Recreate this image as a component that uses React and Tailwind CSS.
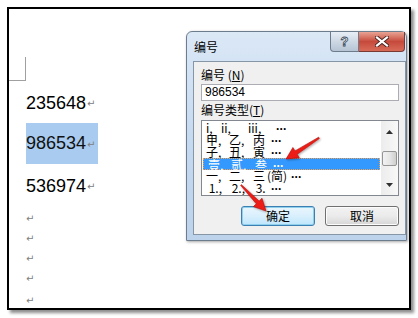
import React from "react";

const cjk = { fontFamily: '"Noto Sans CJK SC", "Liberation Sans", sans-serif' };
const doc = { fontFamily: '"Liberation Sans", Arial, sans-serif' };
const ret = { fontFamily: '"DejaVu Sans", sans-serif' };

function Ret() {
  return (
    <span className="text-[10px] text-[#808080] ml-[1px] relative top-[1px]" style={ret}>
      ↵
    </span>
  );
}

function Dots() {
  return (
    <span className="font-bold text-[12px] tracking-[-0.5px]" style={doc}>
      ···
    </span>
  );
}

function Row({ cols, selected }) {
  return (
    <div
      className={
        "h-[12px] leading-[12px] text-[12px] flex whitespace-pre pl-[4px] " +
        (selected
          ? "bg-[#3399ff] text-white border border-dotted border-[#f0a050] mx-[1px] pl-[3px]"
          : "text-black")
      }
    >
      {cols.map((c, i) => (
        <span key={i} style={{ width: c[1] }} className="shrink-0 h-[12px] leading-[12px]">
          {c[0] === "D" ? <Dots /> : c[0]}
        </span>
      ))}
    </div>
  );
}

export default function App() {
  const rows = [
    { cols: [["i,", 15], ["ii,", 27], ["iii,", 28], ["D", 20]] },
    { cols: [["甲,", 23], ["乙,", 24], ["丙 ", 18], ["D", 20]] },
    { cols: [["子,", 23], ["丑,", 24], ["寅 ", 18], ["D", 20]] },
    { cols: [["壹,", 23], ["贰,", 24], ["叁 ", 18], ["D", 20]], selected: true },
    { cols: [["一,", 23], ["二,", 24], ["三 ", 14], ["(简)", 24], ["D", 20]] },
    { cols: [[" 1.,", 23], [" 2.,", 24], [" 3.", 18], ["D", 20]] },
  ];

  return (
    <div className="relative w-[418px] h-[318px] bg-white overflow-hidden pt-[7px] pl-[7px]">
      {/* page frame */}
      <div className="w-[404px] h-[303px] border-2 border-black bg-white shadow-[3px_3px_3px_rgba(0,0,0,0.45)] overflow-hidden flex flex-col">
        <div className="mt-[48px] w-[17px] h-[24px] border-r border-b border-[#a0a0a0] shrink-0" />
        <div className="pl-[17px] flex flex-col" style={doc}>
          <div className="mt-[12px] h-[20px] leading-[20px] text-[18px] text-black flex items-center">
            235648
            <Ret />
          </div>
          <div className="mt-[10px] h-[41px] flex items-center">
            <div className="w-[72px] h-[41px] bg-[#a8cbef] flex items-center text-[18px] text-[#111]">
              986534
              <Ret />
            </div>
          </div>
          <div className="mt-[12px] h-[20px] leading-[20px] text-[18px] text-black flex items-center">
            536974
            <Ret />
          </div>
          <div className="mt-[12px] flex flex-col">
            <div className="h-[20px] flex items-center"><span className="text-[10px] text-[#808080]" style={ret}>↵</span></div>
            <div className="h-[20px] flex items-center"><span className="text-[10px] text-[#808080]" style={ret}>↵</span></div>
            <div className="h-[20px] flex items-center"><span className="text-[10px] text-[#808080]" style={ret}>↵</span></div>
            <div className="h-[20px] flex items-center"><span className="text-[10px] text-[#808080]" style={ret}>↵</span></div>
            <div className="mt-[2px] h-[20px] flex items-center"><span className="text-[10px] text-[#808080]" style={ret}>↵</span></div>
          </div>
        </div>
      </div>

      {/* dialog window */}
      <div
        className="absolute left-[186px] top-[31px] w-[221px] h-[210px] rounded-t-[6px] border border-[#6d7d8e] bg-gradient-to-b from-[#dbe8f6] via-[#c6daf0] to-[#bcd3eb] shadow-[1px_1px_3px_rgba(0,0,0,0.35)] flex flex-col"
        style={cjk}
      >
        {/* title bar */}
        <div className="h-[29px] flex items-start shrink-0">
          <div className="pl-[7px] pt-[7px] text-[12px] leading-[16px] text-black">编号</div>
          <div className="ml-auto mr-[1px] flex">
            <div className="w-[29px] h-[20px] border border-t-0 border-[#6c7c8c] rounded-bl-[4px] bg-gradient-to-b from-[#e8eef5] via-[#cdd8e4] to-[#b6c4d4] flex items-center justify-center">
              <span className="text-[13px] font-bold text-[#f4f6f8] leading-none" style={{ ...doc, WebkitTextStroke: "0.8px #3b4a5a" }}>?</span>
            </div>
            <div className="w-[46px] h-[20px] border border-l-0 border-t-0 border-[#7a3a34] rounded-br-[4px] bg-gradient-to-b from-[#e8a394] via-[#c64a3c] to-[#d86a58] flex items-center justify-center">
              <svg width="14" height="11" viewBox="0 0 14 11">
                <path d="M2 1.5 L12 9.5 M12 1.5 L2 9.5" stroke="#4a2320" strokeWidth="4" strokeLinecap="square" />
                <path d="M2 1.5 L12 9.5 M12 1.5 L2 9.5" stroke="#ffffff" strokeWidth="2.2" strokeLinecap="square" />
              </svg>
            </div>
          </div>
        </div>

        {/* client panel */}
        <div className="ml-[6px] w-[213px] h-[174px] border border-[#8696a6] bg-[#f0f0f0] flex flex-col pt-[5px] pl-[7px] pr-[6px]">
          <div className="h-[16px] leading-[16px] text-[12px] text-black">
            编号 (<span className="underline">N</span>)
          </div>
          <div className="mt-[1px] h-[17px] border border-[#abadb3] bg-white text-[12px] leading-[15px] pl-[3px] text-black" style={doc}>
            986534
          </div>
          <div className="h-[16px] leading-[16px] text-[12px] text-black mt-[1px]">
            编号类型(<span className="underline">T</span>)
          </div>
          <div className="mt-[2px] h-[76px] border border-[#828790] bg-white flex overflow-hidden">
            <div className="flex-1 pt-[1px] flex flex-col" style={cjk}>
              {rows.map((r, i) => (
                <Row key={i} cols={r.cols} selected={r.selected} />
              ))}
            </div>
            <div className="w-[17px] h-full bg-gradient-to-r from-[#ececec] to-[#f8f8f8] flex flex-col items-center">
              <div className="h-[17px] flex items-center justify-center pt-[4px]">
                <svg width="7" height="4" viewBox="0 0 7 4"><path d="M0 4 L3.5 0 L7 4 Z" fill="#303030" /></svg>
              </div>
              <div className="mt-[13px] w-[15px] h-[15px] border border-[#959595] rounded-[2px] bg-gradient-to-r from-[#f2f2f2] via-[#e6e6e6] to-[#cfcfcf]" />
              <div className="mt-auto h-[17px] flex items-center justify-center pb-[4px]">
                <svg width="7" height="4" viewBox="0 0 7 4"><path d="M0 0 L7 0 L3.5 4 Z" fill="#303030" /></svg>
              </div>
            </div>
          </div>
          <div className="mt-[10px] flex justify-end gap-[10px]">
            <div className="w-[74px] h-[20px] rounded-[3px] border border-[#3c7fb1] shadow-[inset_0_0_0_1px_#8fd0ef] bg-gradient-to-b from-[#eaf6fd] via-[#d9effc] to-[#bee6fd] flex items-center justify-center text-[12px] text-black">
              确定
            </div>
            <div className="w-[74px] h-[20px] rounded-[3px] border border-[#707070] shadow-[inset_0_0_0_1px_#fcfcfc] bg-gradient-to-b from-[#f2f2f2] via-[#ebebeb] to-[#d6d6d6] flex items-center justify-center text-[12px] text-black">
              取消
            </div>
          </div>
        </div>
      </div>

      {/* red annotation arrows */}
      <svg className="absolute left-0 top-0 pointer-events-none" width="418" height="318" viewBox="0 0 418 318">
        <defs>
          <filter id="sh" x="-20%" y="-20%" width="140%" height="140%">
            <feDropShadow dx="1" dy="1" stdDeviation="0.8" floodColor="#000" floodOpacity="0.35" />
          </filter>
        </defs>
        <polygon
          points="318.7,137.2 295.0,150.9 292.9,147.5 286,159 299.3,157.7 297.2,154.3 319.3,138.6"
          fill="#ee1c14"
          stroke="#b00c08"
          strokeWidth="0.6"
          filter="url(#sh)"
        />
        <polygon
          points="240.6,185.35 256.3,203.8 253.4,206.6 266,211 262.0,198.2 259.1,201.0 241.4,184.65"
          fill="#ee1c14"
          stroke="#b00c08"
          strokeWidth="0.6"
          filter="url(#sh)"
        />
      </svg>
    </div>
  );
}
